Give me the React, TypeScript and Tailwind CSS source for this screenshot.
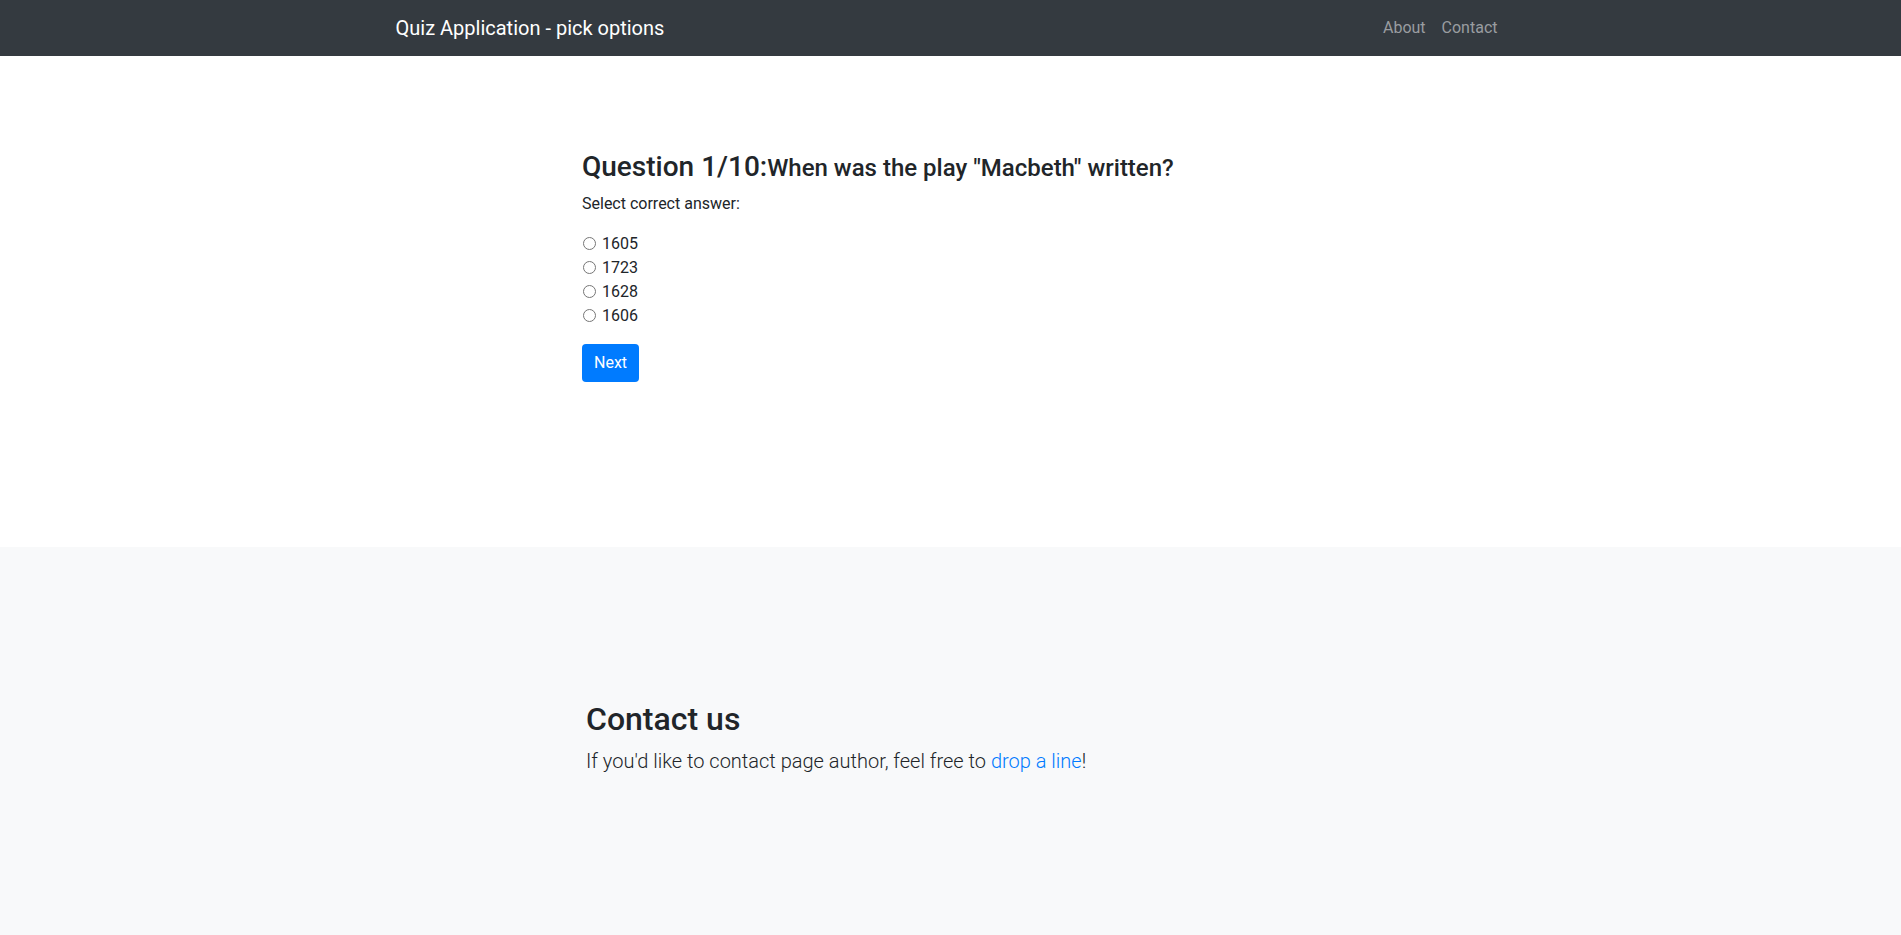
import React from "react";

const answers = ["1605", "1723", "1628", "1606"];

function NavBar() {
  return (
    <nav className="h-14 bg-[#343a40]">
      <div className="mx-auto flex h-full w-[1140px] items-center justify-between px-[15px]">
        <a className="text-xl leading-[30px] text-white" href="#">
          Quiz Application - pick options
        </a>
        <div className="flex">
          <a className="px-2 py-2 text-base text-[#9a9da0]" href="#">About</a>
          <a className="py-2 pl-2 pr-2 text-base text-[#9a9da0]" href="#">Contact</a>
        </div>
      </div>
    </nav>
  );
}

function Question() {
  return (
    <section className="bg-white pb-[165px] pt-[94px]">
      <div className="ml-[582px] w-[760px]">
        <div className="mb-2 flex items-baseline">
          <h3 className="text-[28px] font-medium leading-[1.2]">Question 1/10:</h3>
          <h4 className="text-2xl font-medium leading-[1.2]">When was the play "Macbeth" written?</h4>
        </div>
        <p className="mb-4 text-base leading-6">Select correct answer:</p>
        <div className="flex flex-col">
          {answers.map((a) => (
            <label key={a} className="flex h-6 items-center text-base leading-6">
              <input type="radio" name="answer" className="m-0 ml-[1px] mr-[6px] h-[13px] w-[13px]" />
              {a}
            </label>
          ))}
        </div>
        <button className="mt-4 h-[38px] rounded-[4px] bg-[#007bff] px-3 text-base leading-6 text-white">
          Next
        </button>
      </div>
    </section>
  );
}

function Contact() {
  return (
    <section className="bg-[#f8f9fa] pb-[159px] pt-[153px]">
      <div className="ml-[586px]">
        <h2 className="mb-2 text-[32px] font-medium leading-[1.2]">Contact us</h2>
        <p className="text-xl font-light leading-[30px]">
          If you'd like to contact page author, feel free to{" "}
          <a className="text-[#007bff]" href="#">drop a line</a>!
        </p>
      </div>
    </section>
  );
}

export default function App() {
  return (
    <div className="min-h-[935px] bg-[#f8f9fa] font-['Roboto',sans-serif] text-[#212529]">
      <NavBar />
      <Question />
      <Contact />
    </div>
  );
}
